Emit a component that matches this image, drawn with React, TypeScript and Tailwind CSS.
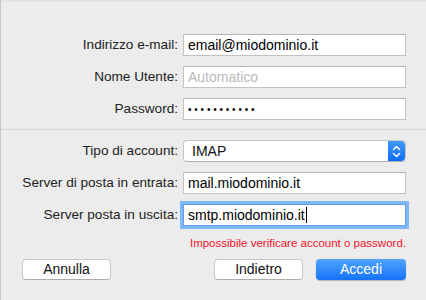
import React from "react";

const font = { fontFamily: '"Liberation Sans", Arial, sans-serif' };

function Label({ children }: { children: React.ReactNode }) {
  return (
    <div className="w-[177px] shrink-0 text-right text-[13.6px] text-[#222]">{children}</div>
  );
}

function Field({ children, focused }: { children: React.ReactNode; focused?: boolean }) {
  return (
    <div
      className={
        "flex h-[22px] w-[223px] items-center bg-white px-[4px] text-[14px] text-black " +
        (focused
          ? "border border-[#5d9ef0] shadow-[0_0_0_3px_#80b8f6]"
          : "border border-[#c3c3c3] border-t-[#b4b4b4]")
      }
    >
      {children}
    </div>
  );
}

function Row({ label, children }: { label: string; children: React.ReactNode }) {
  return (
    <div className="flex h-[22px] items-center gap-[5px]">
      <Label>{label}</Label>
      {children}
    </div>
  );
}

function Stepper() {
  return (
    <div className="flex h-full w-[17px] items-center justify-center rounded-r-[4px] bg-gradient-to-b from-[#3f9afc] to-[#0b6cf6]">
      <svg width="9" height="13" viewBox="0 0 9 13" fill="none" stroke="white" strokeWidth="1.5" strokeLinecap="round" strokeLinejoin="round">
        <path d="M1.5 4.5 L4.5 1.5 L7.5 4.5" />
        <path d="M1.5 8.5 L4.5 11.5 L7.5 8.5" />
      </svg>
    </div>
  );
}

function Button({ children, primary, className }: { children: React.ReactNode; primary?: boolean; className?: string }) {
  return (
    <div
      className={
        "flex h-[21px] items-center justify-center rounded-[4px] text-[14px] " +
        (primary
          ? "bg-gradient-to-b from-[#4ea6fd] to-[#1471f6] text-white shadow-[0_0.5px_1px_rgba(0,0,0,0.25)] "
          : "border border-[#c6c6c6] border-b-[#adadad] bg-white text-[#111] ") +
        (className ?? "")
      }
    >
      {children}
    </div>
  );
}

export default function App() {
  return (
    <div className="h-[300px] w-[426px] overflow-hidden border-l border-[#c6c6c6] bg-[#ececec]" style={font}>
      <div className="h-[2px] bg-[#e2e2e2]" />
      <div className="flex flex-col gap-[10px] pt-[32px]">
        <Row label="Indirizzo e-mail:">
          <Field>email@miodominio.it</Field>
        </Row>
        <Row label="Nome Utente:">
          <Field>
            <span className="text-[#b9b9b9]">Automatico</span>
          </Field>
        </Row>
        <Row label="Password:">
          <Field>
            <span className="text-[10px] tracking-[2.8px]">•••••••••••</span>
          </Field>
        </Row>
      </div>
      <div className="mt-[9px] h-px bg-[#d6d6d6]" />
      <div className="flex flex-col gap-[10px] pt-[10px]">
        <Row label="Tipo di account:">
          <div className="flex h-[22px] w-[223px] items-stretch rounded-[4px] border border-[#c6c6c6] border-b-[#b0b0b0] bg-white">
            <div className="flex flex-1 items-center pl-[8px] text-[14px] text-[#111]">IMAP</div>
            <Stepper />
          </div>
        </Row>
        <Row label="Server di posta in entrata:">
          <Field>mail.miodominio.it</Field>
        </Row>
        <Row label="Server posta in uscita:">
          <Field focused>
            smtp.miodominio.it
            <span className="ml-[1px] inline-block h-[16px] w-px bg-black" />
          </Field>
        </Row>
      </div>
      <div className="mt-[9px] pr-[20px] text-right text-[11.5px] text-[#f2132b]">
        Impossibile verificare account o password.
      </div>
      <div className="mt-[7px] flex items-center pl-[21px] pr-[20px]">
        <Button className="w-[89px]">Annulla</Button>
        <div className="flex-1" />
        <Button className="w-[89px]">Indietro</Button>
        <Button primary className="ml-[13px] w-[90px]">Accedi</Button>
      </div>
    </div>
  );
}
